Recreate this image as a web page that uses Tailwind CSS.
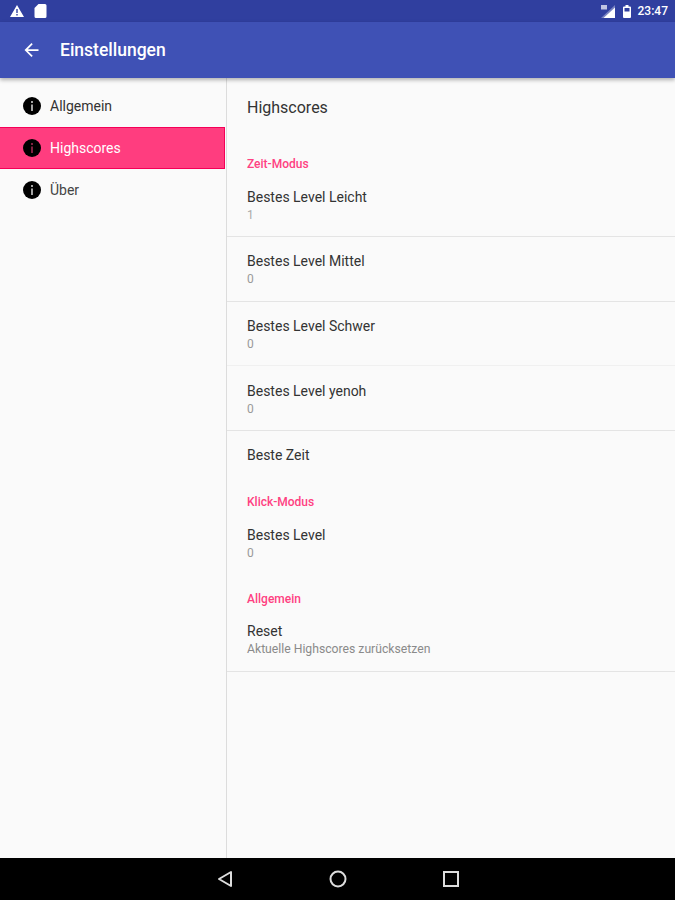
<!DOCTYPE html>
<html lang="de">
<head>
    <meta charset="UTF-8">
    <title>Einstellungen</title>
    <script src="https://cdn.jsdelivr.net/npm/@tailwindcss/browser@4"></script>
</head>
<body class="bg-[#fafafa] font-['Roboto',sans-serif]">
<div class="w-[675px] h-[900px] flex flex-col overflow-hidden">

    <!-- Status bar -->
    <div class="h-[22px] bg-[#303f9f] flex items-center justify-between pl-[10px] pr-[7px] text-white shrink-0">
        <div class="flex items-center gap-[10px]">
            <svg class="w-[14px] h-[12px]" viewBox="0 0 14 12" fill="#fff"><path fill-rule="evenodd" d="M7 0l7 12H0zM6.300 4v4h1.400V4zM6.300 9v1.400h1.400V9z"/></svg>
            <svg class="w-[13px] h-[14px]" viewBox="0 0 13 14" fill="#fff"><path d="M4.500 0H11a1.500 1.500 0 0 1 1.500 1.500V12.500A1.500 1.500 0 0 1 11 14H2a1.500 1.500 0 0 1-1.500-1.500V4z"/></svg>
        </div>
        <div class="flex items-center">
            <svg class="w-[14px] h-[13px] mr-[8px]" viewBox="0 0 14 13" fill="#fff"><path d="M14 0V13H0z" opacity=".35"/><path d="M14 2.500V13H2.500z"/><path d="M0 0h6v4.500H0z" opacity=".7"/></svg>
            <svg class="w-[8px] h-[13px] mr-[7px]" viewBox="0 0 8 13" fill="#fff"><path fill-rule="evenodd" d="M2.500 0h3v1.500H7a1 1 0 0 1 1 1V12a1 1 0 0 1-1 1H1a1 1 0 0 1-1-1V2.500a1 1 0 0 1 1-1h1.500zM1.500 3v3.500h5V3z"/></svg>
            <span class="text-[12px] font-medium leading-none">23:47</span>
        </div>
    </div>

    <!-- App bar -->
    <div class="h-[56px] bg-[#3f51b5] flex items-center text-white shrink-0 relative z-10 shadow-[0_2px_4px_rgba(0,0,0,0.3)]">
        <svg class="w-[15px] h-[14px] ml-[24px]" viewBox="0 0 16 16" fill="#fff"><path d="M16 7H3.800l5.600-5.600L8 0 0 8l8 8 1.400-1.400L3.800 9H16z"/></svg>
        <span class="ml-[21px] pt-[1px] text-[17.500px] font-medium">Einstellungen</span>
    </div>

    <!-- Content -->
    <div class="flex flex-1 min-h-0">
        <!-- Sidebar -->
        <div class="w-[227px] shrink-0 border-r border-[#dcdcdc] pt-[7px]">
            <div class="h-[42px] flex items-center pl-[23px] text-[14px] text-[#333]">
                <svg class="w-[18px] h-[18px] mr-[9px]" viewBox="0 0 18 18"><circle cx="9" cy="9" r="9" fill="#000"/><path d="M8.200 4h1.600v2H8.200zM8.200 7.500h1.600V14H8.200z" fill="#ccc"/></svg>
                Allgemein
            </div>
            <div class="h-[42px] flex items-center pl-[23px] mr-px text-[14px] text-white bg-[#ff3d7f] border-y border-r border-[#f50057]">
                <svg class="w-[18px] h-[18px] mr-[9px]" viewBox="0 0 18 18"><circle cx="9" cy="9" r="9" fill="#000"/><path d="M8.200 4h1.600v2H8.200zM8.200 7.500h1.600V14H8.200z" fill="#a02850"/></svg>
                Highscores
            </div>
            <div class="h-[42px] flex items-center pl-[23px] text-[14px] text-[#444]">
                <svg class="w-[18px] h-[18px] mr-[9px]" viewBox="0 0 18 18"><circle cx="9" cy="9" r="9" fill="#000"/><path d="M8.200 4h1.600v2H8.200zM8.200 7.500h1.600V14H8.200z" fill="#ccc"/></svg>
                Über
            </div>
        </div>

        <!-- Preference list -->
        <div class="flex-1">
            <div class="h-[60px] flex items-center pl-[20px] text-[16px] text-[#333]">Highscores</div>
            <div class="h-[34px] pl-[20px] pt-[18px] text-[12px] leading-[16px] font-medium text-[#ff4081]">Zeit-Modus</div>

            <div class="h-[65px] pl-[20px] pt-[16px] border-b border-[#e4e4e4]">
                <div class="text-[14px] leading-[18px] text-[#333]">Bestes Level Leicht</div>
                <div class="text-[12px] leading-[18px] text-[#aaa]">1</div>
            </div>
            <div class="h-[65px] pl-[20px] pt-[15px] border-b border-[#e4e4e4]">
                <div class="text-[14px] leading-[18px] text-[#333]">Bestes Level Mittel</div>
                <div class="text-[12px] leading-[18px] text-[#999]">0</div>
            </div>
            <div class="h-[64px] pl-[20px] pt-[15px] border-b border-[#f0f0f0]">
                <div class="text-[14px] leading-[18px] text-[#333]">Bestes Level Schwer</div>
                <div class="text-[12px] leading-[18px] text-[#999]">0</div>
            </div>
            <div class="h-[65px] pl-[20px] pt-[16px] border-b border-[#e4e4e4]">
                <div class="text-[14px] leading-[18px] text-[#333]">Bestes Level yenoh</div>
                <div class="text-[12px] leading-[18px] text-[#999]">0</div>
            </div>

            <div class="h-[48px] pl-[20px] flex items-center text-[14px] text-[#333]">Beste Zeit</div>
            <div class="h-[40px] pl-[20px] pt-[15px] text-[12px] leading-[16px] font-medium text-[#ff4081]">Klick-Modus</div>
            <div class="h-[57px] pl-[20px] pt-[7px]">
                <div class="text-[14px] leading-[18px] text-[#333]">Bestes Level</div>
                <div class="text-[12px] leading-[18px] text-[#999]">0</div>
            </div>
            <div class="h-[39px] pl-[20px] pt-[15px] text-[12px] leading-[16px] font-medium text-[#ff4081]">Allgemein</div>
            <div class="h-[57px] pl-[20px] pt-[7px] border-b border-[#e4e4e4]">
                <div class="text-[14px] leading-[18px] text-[#333]">Reset</div>
                <div class="text-[12.200px] leading-[18px] text-[#8a8a8a]">Aktuelle Highscores zurücksetzen</div>
            </div>
        </div>
    </div>

    <!-- Navigation bar -->
    <div class="h-[42px] bg-black shrink-0 flex items-center justify-center gap-[96px]">
        <svg class="w-[16px] h-[18px]" viewBox="0 0 16 18" fill="none" stroke="#ddd" stroke-width="2" stroke-linejoin="round"><path d="M14 2V16L2 9z"/></svg>
        <svg class="w-[18px] h-[18px]" viewBox="0 0 18 18" fill="none" stroke="#ddd" stroke-width="2"><circle cx="9" cy="9" r="7.500"/></svg>
        <svg class="w-[16px] h-[16px]" viewBox="0 0 16 16" fill="none" stroke="#ddd" stroke-width="2"><path d="M1 1h14v14H1z"/></svg>
    </div>
</div>
</body>
</html>
